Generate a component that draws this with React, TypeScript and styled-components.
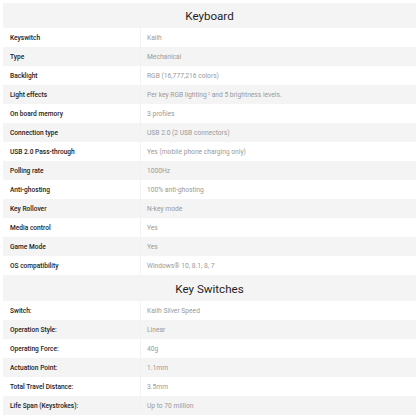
import React from "react";
import styled, { createGlobalStyle } from "styled-components";

type Spec = {
  label: string;
  value: React.ReactNode;
};

type SpecSection = {
  title: string;
  specs: Spec[];
};

const GlobalStyle = createGlobalStyle`
  body {
    margin: 0;
    background: #fff;
    font-family: Roboto, "Liberation Sans", sans-serif;
  }
`;

const Page = styled.div`
  width: 413px;
  padding: 3px 4px 0 3px;
`;

const SectionTitle = styled.div<{ $tall?: boolean }>`
  height: ${(props) => (props.$tall ? "26px" : "25px")};
  display: flex;
  align-items: center;
  justify-content: center;
  background-color: #f4f4f4;
  color: #1e1e1e;
  font-size: 11.6px;
  font-weight: 400;
  padding-top: 1px;
  box-sizing: border-box;
`;

const Row = styled.div<{ $shaded: boolean }>`
  height: 19px;
  display: grid;
  grid-template-columns: 137px 1fr;
  align-items: stretch;
  background-color: ${(props) => (props.$shaded ? "#f4f4f4" : "#fff")};
`;

const Label = styled.div`
  display: flex;
  align-items: center;
  padding-left: 7px;
  font-size: 6.6px;
  font-weight: 500;
  color: #222;
`;

const Value = styled.div`
  display: flex;
  align-items: center;
  padding-left: 6px;
  border-left: 1px solid #f2f2f2;
  font-size: 6.7px;
  color: #9a9a9a;
  white-space: nowrap;
`;

const Sup = styled.sup`
  font-size: 4px;
  vertical-align: top;
  margin: 0 0 3px 1px;
`;

const sections: SpecSection[] = [
  {
    title: "Keyboard",
    specs: [
      { label: "Keyswitch", value: "Kailh" },
      { label: "Type", value: "Mechanical" },
      { label: "Backlight", value: "RGB (16,777,216 colors)" },
      {
        label: "Light effects",
        value: (
          <>
            Per key RGB lighting<Sup>2</Sup>&nbsp;and 5 brightness levels.
          </>
        ),
      },
      { label: "On board memory", value: "3 profiles" },
      { label: "Connection type", value: "USB 2.0 (2 USB connectors)" },
      { label: "USB 2.0 Pass-through", value: "Yes (mobile phone charging only)" },
      { label: "Polling rate", value: "1000Hz" },
      { label: "Anti-ghosting", value: "100% anti-ghosting" },
      { label: "Key Rollover", value: "N-key mode" },
      { label: "Media control", value: "Yes" },
      { label: "Game Mode", value: "Yes" },
      { label: "OS compatibility", value: "Windows\u00ae 10, 8.1, 8, 7" },
    ],
  },
  {
    title: "Key Switches",
    specs: [
      { label: "Switch:", value: "Kailh Silver Speed" },
      { label: "Operation Style:", value: "Linear" },
      { label: "Operating Force:", value: "40g" },
      { label: "Actuation Point:", value: "1.1mm" },
      { label: "Total Travel Distance:", value: "3.5mm" },
      { label: "Life Span (Keystrokes):", value: "Up to 70 million" },
    ],
  },
];

const SpecTable: React.FC<{ section: SpecSection; tall?: boolean }> = ({
  section,
  tall,
}) => (
  <div>
    <SectionTitle $tall={tall}>{section.title}</SectionTitle>
    {section.specs.map((spec, i) => (
      <Row key={spec.label} $shaded={i % 2 === 1}>
        <Label>{spec.label}</Label>
        <Value>{spec.value}</Value>
      </Row>
    ))}
  </div>
);

export default function App() {
  return (
    <>
      <GlobalStyle />
      <Page>
        <SpecTable section={sections[0]} />
        <SpecTable section={sections[1]} tall />
      </Page>
    </>
  );
}
